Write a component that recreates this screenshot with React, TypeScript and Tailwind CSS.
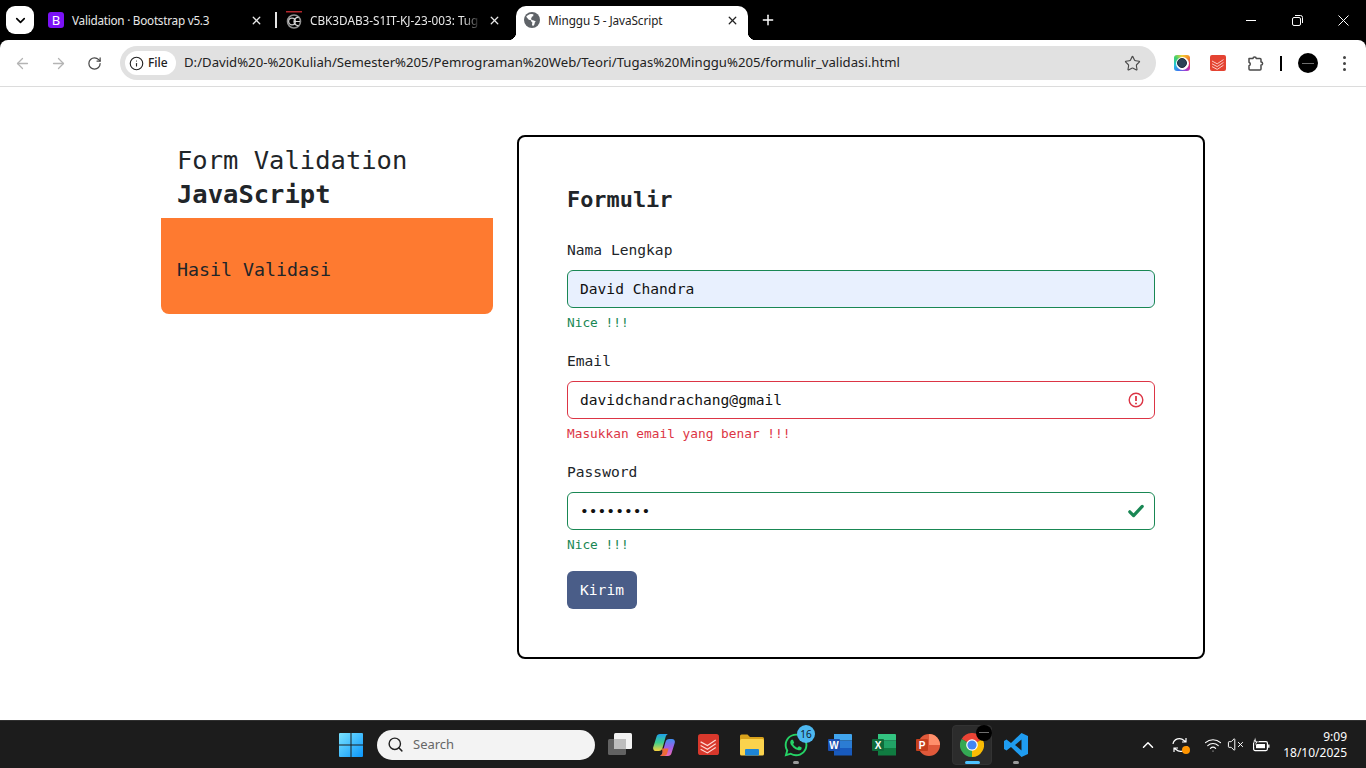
import { ArrowLeft, ArrowRight, ChevronDown, ChevronUp, Info, Plus, RotateCw, Search, Star, VolumeX, Wifi, X } from 'lucide-react';
import { FaWhatsapp } from 'react-icons/fa';

const uiFont = "font-['Noto_Sans',sans-serif]";
const monoFont = "font-['DejaVu_Sans_Mono',monospace]";

function Globe() {
  return (
    <svg width="16" height="16" viewBox="0 0 16 16" className="shrink-0">
      <circle cx="8" cy="8" r="8" fill="#5f6368" />
      <path d="M2.200 4.800l2.600 3 2.200.4.400 1.600 1 .6-.4 2.400 1 1.400 1.400-1.600.4-2 1-1-2-1.200-2-.4-.8-1L8 4.600 9.200 4.200 9.400 2.200 7 2C5 2.300 3.200 3.200 2.200 4.800z" fill="#fff" />
    </svg>
  );
}

function CbkIcon() {
  return (
    <svg width="16" height="18" viewBox="0 0 16 18" className="shrink-0">
      <rect x="0" y="0" width="16" height="1.500" fill="#b3262c" />
      <circle cx="8" cy="10.500" r="6.500" fill="none" stroke="#8f8f8f" strokeWidth="1.600" />
      <circle cx="6" cy="10.500" r="3.400" fill="none" stroke="#c8c8c8" strokeWidth="1.200" />
      <path d="M8 10.500h6M12.500 6.500a4 4 0 0 0-4.500 4 4 4 0 0 0 4.500 4" fill="none" stroke="#d8d8d8" strokeWidth="1.200" />
    </svg>
  );
}

function TabClose({ dark }: { dark?: boolean }) {
  return <X size={13} strokeWidth={2.4} className={dark ? 'text-[#222]' : 'text-[#e8e8e8]'} />;
}

function ColorExt() {
  return (
    <div className="w-4 h-4 rounded-[3px] flex items-center justify-center bg-[conic-gradient(#f7d038,#f28c28,#e6266f,#a03fd6,#3a7bf0,#22c7d8,#3ccf6e,#f7d038)]">
      <div className="w-[13px] h-[13px] rounded-full bg-white flex items-center justify-center">
        <div className="w-2.5 h-2.5 rounded-full bg-[#2c4257] border border-[#1c2b3a]" />
      </div>
    </div>
  );
}

function TodoistIcon({ size, fill }: { size: number; fill: string }) {
  return (
    <svg width={size} height={size} viewBox="0 0 16 16">
      <rect width="16" height="16" rx="2" fill={fill} />
      <path d="M2 6l5.200 2.800L13.500 4.600M2 8.800l5.200 2.800 6.300-4.200M2 11.600l5.200 2.800 6.300-4.200" fill="none" stroke="#ffd9d4" strokeWidth="0.900" />
    </svg>
  );
}

function PuzzleIcon() {
  return (
    <svg width="18" height="18" viewBox="0 0 18 18" fill="none" stroke="#4a4a4a" strokeWidth="1.500" strokeLinejoin="round">
      <path d="M2 4.500h4a1.600 1.600 0 0 1 3.200 0H13a1 1 0 0 1 1 1v2.400a1.600 1.600 0 0 1 0 3.200V15a1 1 0 0 1-1 1H3a1 1 0 0 1-1-1v-3.200a1.900 1.900 0 0 0 0-3.600z" />
    </svg>
  );
}

function Avatar({ size }: { size: number }) {
  return (
    <div className="rounded-full bg-black flex items-center justify-center" style={{ width: size, height: size }}>
      <div className="w-[62%] h-px bg-[#6e6e6e]" />
    </div>
  );
}

function Browser() {
  return (
    <>
      <div className={`h-10 bg-black flex items-start shrink-0 ${uiFont}`}>
        <div className="mt-1.5 ml-1.5 w-7 h-7 bg-white rounded-[9px] flex items-center justify-center">
          <ChevronDown size={15} strokeWidth={2.6} className="text-black" />
        </div>
        <div className="ml-3.5 w-[222px] h-10 flex items-center">
          <div className="w-4 h-4 rounded-[3px] bg-[#7b12f5] text-white text-[13px] leading-4 text-center shrink-0">B</div>
          <span className="ml-2 w-[178px] pt-px text-[11.75px] tracking-[-0.26px] text-[#e8e8e8] whitespace-nowrap">Validation · Bootstrap v5.3</span>
          <TabClose />
        </div>
        <div className="ml-[5px] mt-3 w-0.5 h-4 bg-[#e6e6e6]" />
        <div className="ml-[9px] w-[232px] h-10 flex items-center">
          <CbkIcon />
          <span className="ml-2 w-[178px] pt-px text-[11.75px] text-[#e8e8e8] whitespace-nowrap [mask-image:linear-gradient(to_right,black_86%,transparent_96%)]">CBK3DAB3-S1IT-KJ-23-003: Tug</span>
          <TabClose />
        </div>
        <div className="relative ml-[-2px] mt-1.5 w-[232px] h-[34px] pb-1.5 bg-white rounded-t-[10px] flex items-center pl-2 text-[#222]">
          <span className="absolute -left-2 bottom-0 w-2 h-2 bg-[radial-gradient(circle_at_0_0,transparent_8px,white_8.5px)]" />
          <span className="absolute -right-2 bottom-0 w-2 h-2 bg-[radial-gradient(circle_at_100%_0,transparent_8px,white_8.5px)]" />
          <Globe />
          <span className="ml-2 w-[178px] pt-px text-[11.75px] tracking-[-0.08px] whitespace-nowrap">Minggu 5 - JavaScript</span>
          <TabClose dark />
        </div>
        <Plus size={16} strokeWidth={2.2} className="ml-3 mt-3 text-white" />
        <div className="ml-auto flex h-10 items-center text-white">
          <div className="w-[46px] flex justify-center"><div className="w-2.5 h-px bg-white" /></div>
          <div className="w-[46px] flex justify-center">
            <svg width="11" height="11" viewBox="0 0 11 11" fill="none" stroke="#fff"><rect x="0.500" y="2.500" width="8" height="8" rx="1.500" /><path d="M3 .5h5.500a2 2 0 0 1 2 2V8" /></svg>
          </div>
          <div className="w-[46px] flex justify-center">
            <svg width="11" height="11" viewBox="0 0 11 11" stroke="#fff"><path d="M.5.5l10 10M10.500.5l-10 10" /></svg>
          </div>
        </div>
      </div>

      <div className={`h-[47px] shrink-0 bg-black ${uiFont}`}>
        <div className="h-[47px] bg-white rounded-t-lg border-b border-[#dcdcdc] flex items-center">
          <ArrowLeft size={17} strokeWidth={1.8} className="ml-[14px] text-[#b4b4b4]" />
          <ArrowRight size={17} strokeWidth={1.8} className="ml-[19px] text-[#b4b4b4]" />
          <RotateCw size={15} strokeWidth={2} className="ml-[20px] text-[#4a4a4a]" />
          <div className="ml-[18px] w-[1036px] h-[34px] rounded-full bg-[#e1e1e1] flex items-center">
            <div className="ml-[5px] w-[51px] h-6 rounded-full bg-white flex items-center pl-1">
              <Info size={15} strokeWidth={1.8} className="text-[#222]" />
              <span className="ml-[4px] text-[12px] font-medium text-[#222]">File</span>
            </div>
            <span className="ml-2 text-[13.17px] text-[#222] whitespace-nowrap">D:/David%20-%20Kuliah/Semester%205/Pemrograman%20Web/Teori/Tugas%20Minggu%205/formulir_validasi.html</span>
            <Star size={17} strokeWidth={1.6} className="ml-auto mr-[15px] text-[#4a4a4a]" />
          </div>
          <div className="ml-[18px]"><ColorExt /></div>
          <div className="ml-5"><TodoistIcon size={16} fill="#e44332" /></div>
          <div className="ml-[21px]"><PuzzleIcon /></div>
          <div className="ml-[15px] w-0.5 h-[15px] bg-black" />
          <div className="ml-[16px]"><Avatar size={20} /></div>
          <div className="ml-[25px] flex flex-col gap-[3px]">
            <div className="w-[3px] h-[3px] rounded-full bg-[#444]" />
            <div className="w-[3px] h-[3px] rounded-full bg-[#444]" />
            <div className="w-[3px] h-[3px] rounded-full bg-[#444]" />
          </div>
        </div>
      </div>
    </>
  );
}

function Field({ label, value, type = 'text', state, message, bg, icon }: {
  label: string;
  value: string;
  type?: string;
  state: 'ok' | 'bad';
  message: string;
  bg?: string;
  icon?: React.ReactNode;
}) {
  const ok = state === 'ok';
  return (
    <div className="mb-4">
      <label className="block mb-2 text-[14.6px] leading-6 text-[#212529]">{label}</label>
      <div className="relative">
        <input
          readOnly
          type={type}
          value={value}
          className={`block w-full h-[38px] px-3 pb-[2px] rounded-md border outline-none text-[14.6px] text-[#111] ${ok ? 'border-[#198754]' : 'border-[#dc3545]'} ${bg ?? 'bg-white'} ${monoFont}`}
        />
        {icon && <div className="absolute right-[11px] top-[11px]">{icon}</div>}
      </div>
      <div className={`mt-1 text-[12.8px] leading-[21px] ${ok ? 'text-[#198754]' : 'text-[#dc3545]'}`}>{message}</div>
    </div>
  );
}

function PageBody() {
  return (
    <main className={`flex-1 bg-white flex justify-center items-start pt-12 ${monoFont}`}>
      <div className="w-[1044px] flex gap-6">
        <div className="w-[332px] pt-[9px]">
          <h3 className="pl-4 mb-[7px] text-[25.5px] leading-[33.5px] text-[#212529]">
            Form Validation<br /><b>JavaScript</b>
          </h3>
          <div className="h-24 pl-4 pt-10 bg-[#fe7a30] rounded-b-lg text-[18.3px] leading-6 text-[#212529]">Hasil Validasi</div>
        </div>
        <div className="w-[688px] border-2 border-black rounded-lg p-12">
          <h4 className="mb-6 text-[21.9px] leading-[29px] font-bold text-[#212529]">Formulir</h4>
          <Field label="Nama Lengkap" value="David Chandra" state="ok" message="Nice !!!" bg="bg-[#e8f0fe]" />
          <Field
            label="Email"
            value="davidchandrachang@gmail"
            state="bad"
            message="Masukkan email yang benar !!!"
            icon={
              <svg width="16" height="16" viewBox="0 0 16 16" fill="none" stroke="#dc3545" strokeWidth="1.400">
                <circle cx="8" cy="8" r="6.800" />
                <path d="M8 4v5M8 10.800v1.400" strokeWidth="1.800" />
              </svg>
            }
          />
          <Field
            label="Password"
            value="david123"
            type="password"
            state="ok"
            message="Nice !!!"
            icon={
              <svg width="16" height="16" viewBox="0 0 16 16" fill="none" stroke="#198754" strokeWidth="3.200" strokeLinecap="round" strokeLinejoin="round">
                <path d="M1.800 8.800l3.800 3.800 8.600-9.200" />
              </svg>
            }
          />
          <button className="block w-[70px] h-[38px] rounded-md bg-[#4a5d88] text-white text-[14.6px] font-medium">Kirim</button>
        </div>
      </div>
    </main>
  );
}

function Slot({ children, dot, active }: { children: React.ReactNode; dot?: boolean; active?: boolean }) {
  return (
    <div className="relative w-11 h-12 flex items-center justify-center">
      {active && <div className="absolute left-0.5 top-1 w-10 h-10 rounded bg-[#2c2c2c] border border-[#333]" />}
      <div className="relative flex">{children}</div>
      {dot && <div className="absolute bottom-[5px] left-[19px] w-1.5 h-[3px] rounded-full bg-[#9a9a9a]" />}
      {active && <div className="absolute bottom-[5px] left-[15px] w-[15px] h-[3px] rounded-full bg-[#4cc2ff]" />}
    </div>
  );
}

function Taskbar() {
  return (
    <footer className={`h-12 shrink-0 bg-[#1c1c1c] border-t border-[#303030] flex items-center pl-[329px] ${uiFont}`}>
      <Slot>
        <svg width="24" height="24" viewBox="0 0 24 24">
          <defs>
            <linearGradient id="win" x1="0" y1="0" x2="1" y2="1">
              <stop offset="0" stopColor="#7be3ff" />
              <stop offset="1" stopColor="#0a96fb" />
            </linearGradient>
          </defs>
          <path d="M0 1a1 1 0 0 1 1-1h10.500v11.500H0zM12.500 0H23a1 1 0 0 1 1 1v10.500H12.500zM0 12.500h11.500V24H1a1 1 0 0 1-1-1zM12.500 12.500H24V23a1 1 0 0 1-1 1H12.500z" fill="url(#win)" />
        </svg>
      </Slot>
      <div className="ml-1 w-[218px] h-[30px] rounded-full bg-[#f3f3f3] flex items-center pl-[10px]">
        <Search size={17} strokeWidth={2} className="text-[#222]" />
        <span className="ml-[9px] text-[13px] text-[#666]">Search</span>
      </div>
      <div className="ml-[3px] flex">
        <Slot>
          <svg width="24" height="24" viewBox="0 0 24 24">
            <rect x="6" y="0" width="18" height="16" rx="1.500" fill="#f2f2f2" />
            <rect x="0" y="6" width="18" height="16" rx="1.500" fill="#6a6a6a" fillOpacity="0.900" />
            <rect x="6" y="6" width="12" height="10" fill="#bdbdbd" />
          </svg>
        </Slot>
        <Slot>
          <svg width="22" height="24" viewBox="0 0 22 24">
            <defs>
              <linearGradient id="cpA" x1="0.500" y1="0" x2="0.500" y2="1">
                <stop offset="0" stopColor="#1f9fe8" />
                <stop offset="0.500" stopColor="#3ccf8e" />
                <stop offset="1" stopColor="#f7d23e" />
              </linearGradient>
              <linearGradient id="cpB" x1="0.500" y1="0" x2="0.500" y2="1">
                <stop offset="0" stopColor="#ee6db0" />
                <stop offset="0.500" stopColor="#a05fe6" />
                <stop offset="1" stopColor="#3f8ff2" />
              </linearGradient>
            </defs>
            <path d="M7 1h8c-1.300.6-2 1.600-2.400 3L9.500 15c-.5 2-1.800 3-3.800 3H3C.8 18-.4 16 .3 14L3.500 3.800C4 2 5.200 1 7 1z" fill="url(#cpA)" />
            <path d="M7 1h8c-1.300.6-2 1.600-2.400 3L9.500 15c-.5 2-1.800 3-3.800 3H3C.8 18-.4 16 .3 14L3.500 3.800C4 2 5.200 1 7 1z" fill="url(#cpB)" transform="rotate(180 11 12)" />
            <path d="M9 15.500h6.500l-1.300 4.700c-.5 1.800-1.700 2.800-3.700 2.800H7c1.500-.8 2.300-1.800 2.600-3.200z" fill="#ee6a36" />
          </svg>
        </Slot>
        <Slot><TodoistIcon size={21} fill="#d8382c" /></Slot>
        <Slot>
          <svg width="24" height="22" viewBox="0 0 24 22">
            <path d="M0 2a1.500 1.500 0 0 1 1.500-1.500h6L10 3h12.500A1.500 1.500 0 0 1 24 4.500V8H0z" fill="#d9a21b" />
            <rect x="0" y="5" width="24" height="16.500" rx="1.500" fill="#fbd34d" />
            <rect x="5" y="15" width="14" height="6.500" rx="1" fill="#1e86d6" />
          </svg>
        </Slot>
        <Slot dot>
          <FaWhatsapp size={26} className="text-[#25d366]" />
          <div className="absolute -right-[6px] -top-[7px] w-[18px] h-[18px] rounded-full bg-[#4db8f0] text-[10px] leading-[18px] text-center text-[#10202c]">16</div>
        </Slot>
        <Slot>
          <svg width="24" height="22" viewBox="0 0 24 22">
            <path d="M6 0h17a1 1 0 0 1 1 1v5.500H6z" fill="#41a5ee" />
            <rect x="6" y="6.500" width="18" height="7.500" fill="#2b7cd3" />
            <rect x="6" y="14" width="18" height="7.500" fill="#185abd" />
            <rect x="0" y="5" width="12" height="12" rx="1" fill="#1a4fb0" />
            <text x="6" y="14.500" textAnchor="middle" fontSize="10" fontWeight="700" fill="#fff" fontFamily="Liberation Sans">W</text>
          </svg>
        </Slot>
        <Slot>
          <svg width="24" height="22" viewBox="0 0 24 22">
            <path d="M6 0h17a1 1 0 0 1 1 1v5.500H6z" fill="#33c481" />
            <rect x="6" y="6.500" width="18" height="7.500" fill="#21a366" />
            <rect x="6" y="14" width="18" height="7.500" fill="#107c41" />
            <rect x="0" y="5" width="12" height="12" rx="1" fill="#0f6b3a" />
            <text x="6" y="14.500" textAnchor="middle" fontSize="10" fontWeight="700" fill="#fff" fontFamily="Liberation Sans">X</text>
          </svg>
        </Slot>
        <Slot>
          <svg width="24" height="22" viewBox="0 0 24 22">
            <circle cx="13" cy="11" r="11" fill="#e0593a" />
            <path d="M13 0a11 11 0 0 1 11 11H13z" fill="#ff8f6b" />
            <rect x="0" y="5" width="12" height="12" rx="1" fill="#c43e1c" />
            <text x="6" y="14.500" textAnchor="middle" fontSize="10" fontWeight="700" fill="#fff" fontFamily="Liberation Sans">P</text>
          </svg>
        </Slot>
        <Slot active>
          <svg width="24" height="24" viewBox="0 0 24 24">
            <path d="M12 12L1.600 6A12 12 0 0 1 22.400 6Z" fill="#ea4335" />
            <path d="M12 12L22.400 6A12 12 0 0 1 12 24Z" fill="#fbbc04" />
            <path d="M12 12L12 24A12 12 0 0 1 1.600 6Z" fill="#34a853" />
            <circle cx="12" cy="12" r="5.800" fill="#fff" />
            <circle cx="12" cy="12" r="4.600" fill="#4285f4" />
          </svg>
          <div className="absolute -right-2 -top-2"><Avatar size={16} /></div>
        </Slot>
        <Slot dot>
          <svg width="24" height="24" viewBox="0 0 24 24">
            <path fillRule="evenodd" d="M17.500 0L24 3v18l-6.500 3L7 14l-4.500 3.500L0 16V8l2.500-1.500L7 10zM17.500 6.500L11 12l6.500 5.500z" fill="#1f9cf0" />
          </svg>
        </Slot>
      </div>
      <div className="ml-[101px] flex items-center text-white">
        <ChevronUp size={18} strokeWidth={2} />
        <div className="relative ml-[14px]">
          <svg width="18" height="18" viewBox="0 0 18 18" fill="none" stroke="#fff" strokeWidth="1.200">
            <path d="M2 8a6.500 6.500 0 0 1 11-3.500L15 6M15 2v4h-4M16 10a6.500 6.500 0 0 1-11 3.500L3 12M3 16v-4h4" />
          </svg>
          <div className="absolute right-[-1px] bottom-0 w-2 h-2 rounded-full bg-[#ff9500]" />
        </div>
        <Wifi size={18} strokeWidth={1.500} className="ml-[15px]" />
        <VolumeX size={17} strokeWidth={1.400} className="ml-[5px]" />
        <svg width="18" height="16" viewBox="0 0 18 16" className="ml-[8px]" fill="none" stroke="#fff" strokeWidth="1.200">
          <rect x="1.600" y="4.600" width="13.800" height="9" rx="1.500" />
          <rect x="4" y="7" width="9" height="4.200" fill="#fff" stroke="none" />
          <path d="M16.800 7.500v3.200" strokeWidth="1.400" />
          <path d="M3.500 0L1 5h2.500L2.500 9.500 6.500 4H4.200z" fill="#fff" stroke="#1c1c1c" strokeWidth="0.700" />
        </svg>
        <div className="ml-[10px] w-[67px] text-right text-[12px] leading-4">
          <div>9:09</div>
          <div>18/10/2025</div>
        </div>
      </div>
    </footer>
  );
}

export default function App() {
  return (
    <div className="w-[1366px] h-[768px] flex flex-col overflow-hidden">
      <Browser />
      <PageBody />
      <Taskbar />
    </div>
  );
}
